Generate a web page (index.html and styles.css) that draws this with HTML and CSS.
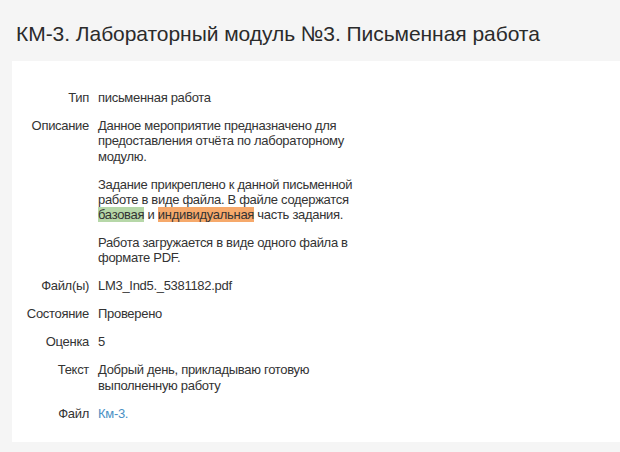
FILE: index.html
```html
<!DOCTYPE html>
<html lang="ru">
<head>
<meta charset="utf-8">
<title>КМ-3</title>
<link rel="stylesheet" href="styles.css">
</head>
<body>
<h1 class="page-title">КМ-3. Лабораторный модуль №3. Письменная работа</h1>
<div class="panel">
  <dl class="info">
    <dt>Тип</dt>
    <dd>письменная работа</dd>
    <dt>Описание</dt>
    <dd>
      <p>Данное мероприятие предназначено для предоставления отчёта по лабораторному модулю.</p>
      <p>Задание прикреплено к данной письменной работе в виде файла. В файле содержатся <span class="hl-green">базовая</span> и <span class="hl-orange">индивидуальная</span> часть задания.</p>
      <p>Работа загружается в виде одного файла в формате PDF.</p>
    </dd>
    <dt>Файл(ы)</dt>
    <dd>LM3_Ind5._5381182.pdf</dd>
    <dt>Состояние</dt>
    <dd>Проверено</dd>
    <dt>Оценка</dt>
    <dd>5</dd>
    <dt>Текст</dt>
    <dd>Добрый день, прикладываю готовую выполненную работу</dd>
    <dt>Файл</dt>
    <dd><a class="link" href="#">Км-3.</a></dd>
  </dl>
</div>
</body>
</html>
```
FILE: styles.css
```css
html, body {
  margin: 0;
  padding: 0;
}
body {
  background: #f5f5f5;
  font-family: "Liberation Sans", Arial, sans-serif;
  color: #333;
  width: 620px;
  height: 452px;
  overflow: hidden;
}
.page-title {
  margin: 0;
  padding: 22px 0 0 16px;
  height: 61px;
  box-sizing: border-box;
  font-size: 21px;
  font-weight: normal;
  line-height: 24px;
  color: #2b2b2b;
  letter-spacing: -0.05px;
}
.panel {
  margin-left: 12px;
  background: #fff;
  height: 381px;
  box-sizing: border-box;
  padding: 29px 0 0 0;
}
.info {
  margin: 0;
  display: grid;
  grid-template-columns: 77px 266px;
  column-gap: 9px;
  row-gap: 12.7px;
  font-size: 13px;
  line-height: 15.3px;
  letter-spacing: -0.3px;
}
.info dt {
  text-align: right;
  color: #333;
}
.info dd {
  margin: 0;
  color: #333;
}
.info p {
  margin: 0 0 12.7px 0;
}
.info p:last-child {
  margin-bottom: 0;
}
.hl-green {
  background: #b6d7a8;
}
.hl-orange {
  background: #f6a96b;
}
.link {
  color: #4a8fc4;
  text-decoration: none;
}
```
